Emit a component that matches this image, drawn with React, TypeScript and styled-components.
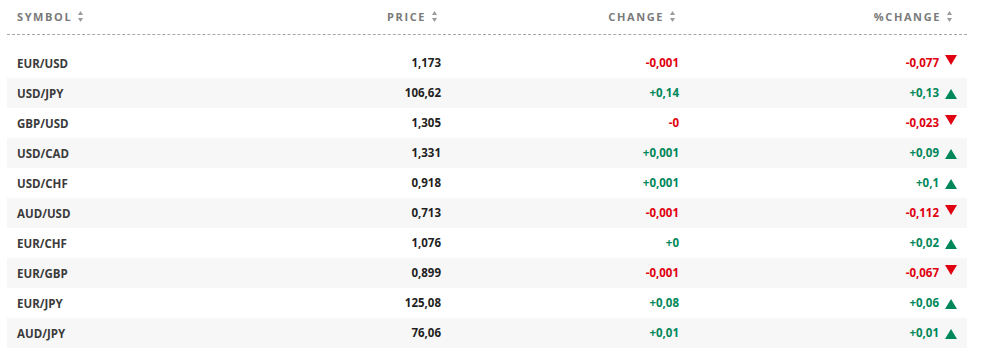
import React from "react";
import styled, { createGlobalStyle } from "styled-components";

const GlobalStyle = createGlobalStyle`
  body {
    margin: 0;
    background: #fff;
    font-family: "Open Sans", "Liberation Sans", sans-serif;
  }
`;

const Wrapper = styled.div`
  padding: 0 16px 0 7px;
`;

const Grid = styled.div`
  display: grid;
  grid-template-columns: 250px 184px 238px 1fr;
  align-items: center;
`;

const HeaderRow = styled(Grid)`
  height: 34px;
  border-bottom: 1px dashed #a8a8a8;
  margin-bottom: 13px;
`;

const HeaderCell = styled.div<{ $align?: "left" | "right"; $pad?: number }>`
  display: flex;
  align-items: center;
  justify-content: ${(p) => (p.$align === "left" ? "flex-start" : "flex-end")};
  padding-left: ${(p) => (p.$align === "left" ? "10px" : "0")};
  padding-right: ${(p) => p.$pad ?? 4}px;
  font-size: 11px;
  font-weight: 700;
  letter-spacing: 1.6px;
  color: #7a7a7a;
  padding-bottom: 2px;
`;

const SortIcon = styled.svg`
  margin-left: 6px;
  width: 5px;
  height: 11px;
  flex: none;
`;

const Row = styled(Grid)<{ $alt: boolean }>`
  height: 30px;
  background: ${(p) => (p.$alt ? "#f7f7f7" : "#fff")};
`;

const Cell = styled.div<{ $align?: "left" | "right" }>`
  display: flex;
  align-items: center;
  justify-content: ${(p) => (p.$align === "left" ? "flex-start" : "flex-end")};
  padding-left: ${(p) => (p.$align === "left" ? "10px" : "0")};
  font-size: 11.5px;
  font-weight: 700;
  padding-top: 1px;
`;

const Symbol = styled(Cell)`
  color: #3b3b3b;
`;

const Price = styled(Cell)`
  color: #1f1f1f;
  margin-top: -2px;
`;

const Change = styled(Cell)<{ $up: boolean }>`
  color: ${(p) => (p.$up ? "#00875a" : "#e0000f")};
  margin-top: -2px;
`;

const PctCell = styled(Change)`
  padding-right: 10px;
`;

const Arrow = styled.svg`
  margin-left: 6px;
  width: 12px;
  height: 10px;
  flex: none;
`;

type Quote = {
  symbol: string;
  price: string;
  change: string;
  pct: string;
};

const quotes: Quote[] = [
  { symbol: "EUR/USD", price: "1,173", change: "-0,001", pct: "-0,077" },
  { symbol: "USD/JPY", price: "106,62", change: "+0,14", pct: "+0,13" },
  { symbol: "GBP/USD", price: "1,305", change: "-0", pct: "-0,023" },
  { symbol: "USD/CAD", price: "1,331", change: "+0,001", pct: "+0,09" },
  { symbol: "USD/CHF", price: "0,918", change: "+0,001", pct: "+0,1" },
  { symbol: "AUD/USD", price: "0,713", change: "-0,001", pct: "-0,112" },
  { symbol: "EUR/CHF", price: "1,076", change: "+0", pct: "+0,02" },
  { symbol: "EUR/GBP", price: "0,899", change: "-0,001", pct: "-0,067" },
  { symbol: "EUR/JPY", price: "125,08", change: "+0,08", pct: "+0,06" },
  { symbol: "AUD/JPY", price: "76,06", change: "+0,01", pct: "+0,01" },
];

const Sort = () => (
  <SortIcon viewBox="0 0 5 11">
    <polygon points="2.5,0 5,4 0,4" fill="#9a9a9a" />
    <polygon points="0,7 5,7 2.5,11" fill="#9a9a9a" />
  </SortIcon>
);

const TrendArrow = ({ up }: { up: boolean }) =>
  up ? (
    <Arrow viewBox="0 0 12 10" style={{ marginTop: 2 }}>
      <polygon points="6,0 12,10 0,10" fill="#00875a" />
    </Arrow>
  ) : (
    <Arrow viewBox="0 0 12 10" style={{ marginTop: -6 }}>
      <polygon points="0,0 12,0 6,10" fill="#e0000f" />
    </Arrow>
  );

export default function App() {
  return (
    <Wrapper>
      <GlobalStyle />
      <HeaderRow>
        <HeaderCell $align="left">
          SYMBOL <Sort />
        </HeaderCell>
        <HeaderCell $pad={4}>
          PRICE <Sort />
        </HeaderCell>
        <HeaderCell $pad={4}>
          CHANGE <Sort />
        </HeaderCell>
        <HeaderCell $pad={15}>
          %CHANGE <Sort />
        </HeaderCell>
      </HeaderRow>
      {quotes.map((q, i) => {
        const up = q.pct.startsWith("+");
        return (
          <Row key={q.symbol} $alt={i % 2 === 1}>
            <Symbol $align="left">{q.symbol}</Symbol>
            <Price>{q.price}</Price>
            <Change $up={q.change.startsWith("+")}>{q.change}</Change>
            <PctCell $up={up}>
              {q.pct}
              <TrendArrow up={up} />
            </PctCell>
          </Row>
        );
      })}
    </Wrapper>
  );
}
